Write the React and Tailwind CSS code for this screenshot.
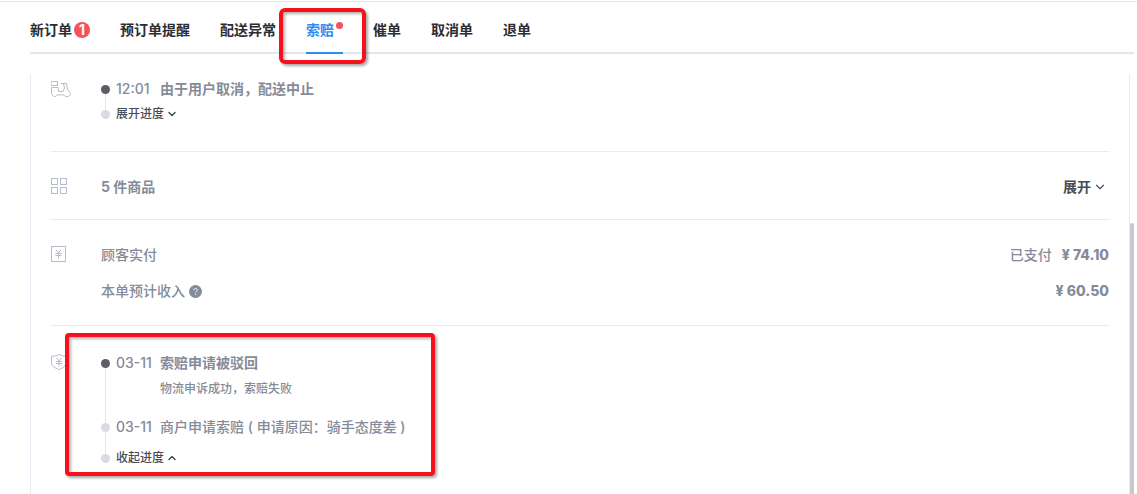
import { FiChevronDown, FiChevronUp } from 'react-icons/fi';

const tabs = [
    { label: '新订单', count: 1 },
    { label: '预订单提醒' },
    { label: '配送异常' },
    { label: '索赔', active: true, dot: true },
    { label: '催单' },
    { label: '取消单' },
    { label: '退单' },
];

const ScooterIcon = () => (
    <svg className="w-5 h-4" viewBox="0 0 20 16" fill="none" stroke="currentColor" strokeLinejoin="round" strokeLinecap="round">
        <rect x="0.5" y="0.5" width="6" height="4" />
        <path d="M10.500 2.500h2l1 4.500-1.500 3.500H7.500l-.5-4H.5v6c0 .8.400 1.300 1.100 1.500.3 1 1.100 1.500 2.100 1.500s1.900-.6 2.200-1.600h7c.4 1.100 1.600 1.700 3.100 1.700 2 0 3.500-1.200 3.500-3 0-1.500-1-2.600-2.500-2.900L15.300 2.500h-2.800" />
    </svg>
);

const GridIcon = () => (
    <svg className="w-4 h-4" viewBox="0 0 16 16" fill="none" stroke="currentColor">
        <rect x="0.5" y="0.5" width="6" height="6" />
        <rect x="9.5" y="0.5" width="6" height="6" />
        <rect x="0.5" y="9.5" width="6" height="6" />
        <rect x="9.5" y="9.5" width="6" height="6" />
    </svg>
);

const MoneyIcon = () => (
    <svg className="w-4 h-4" viewBox="0 0 16 16" fill="none" stroke="currentColor">
        <rect x="0.5" y="0.5" width="14" height="15" />
        <path d="M5 3.500l2.500 3.500 2.500-3.500M4.500 7.500h6M4.500 9.500h6M7.500 7v5.500" />
    </svg>
);

const ShieldIcon = () => (
    <svg className="w-4 h-4" viewBox="0 0 16 16" fill="none" stroke="currentColor">
        <path d="M8 .5c2 1.200 4.500 1.600 7 1.600v6.400c0 3.500-3 5.700-7 7-4-1.300-7.500-3.500-7.500-7V2.100C3.500 2.100 6 1.700 8 .5z" />
        <path d="M5.500 4l2.500 3 2.500-3M5 7.500h6M5 9.500h6M8 7v5.500" />
    </svg>
);

const HelpIcon = () => (
    <svg className="w-[13px] h-[13px]" viewBox="0 0 13 13" fill="none">
        <circle cx="6.5" cy="6.5" r="6.500" fill="#858b99" />
        <path d="M4.700 5.200c0-1 .8-1.700 1.800-1.700s1.800.7 1.800 1.600c0 1.200-1.700 1.300-1.700 2.500M6.600 8.800v1.100" stroke="#fff" />
    </svg>
);

const Tab = ({ label, count, dot, active }) => (
    <button
        role="tab"
        aria-selected={!!active}
        className={`relative h-[52px] -mb-[2px] pt-[18px] pb-3 flex items-center whitespace-nowrap border-b-2 ${active ? 'text-[#2d8cf0] border-[#2d8cf0]' : 'text-[#2b2d33] border-transparent'}`}
    >
        {label}
        {count && (
            <span className="ml-[2px] w-4 h-4 rounded-full bg-[#f5515a] text-white text-sm leading-4 font-bold text-center">{count}</span>
        )}
        {dot && <span className="ml-[2px] mb-[10px] w-[7px] h-[7px] rounded-full bg-[#f5515a]" />}
        {active && (
            <span className="absolute z-10 top-[6px] -left-[27px] -right-[23px] -bottom-[12px] border-4 border-[#f5101c] rounded-md shadow-[2px_2px_3px_rgba(0,0,0,0.35),inset_2px_2px_3px_rgba(0,0,0,0.3)]" />
        )}
    </button>
);

const Section = ({ icon, className, children }) => (
    <section className={`relative flex ${className}`}>
        <div className="w-[50px] shrink-0 text-[#b4bccd]">{icon}</div>
        <div className="flex-1">{children}</div>
    </section>
);

// one node of the progress line, the line runs down to the next node
const Step = ({ current, last, className = '', children }) => (
    <li className={`relative flex ${className}`}>
        {!last && <span className="absolute left-1 top-[10px] -bottom-[10px] w-px bg-[#e4e7f0]" />}
        <div className="w-[15px] shrink-0">
            <span className={`relative block mt-[6px] w-[9px] h-[9px] rounded-full ${current ? 'bg-[#5a5e6b]' : 'bg-[#d6dbe6]'}`} />
        </div>
        {children}
    </li>
);

const ToggleButton = ({ open, children }) => (
    <button className="h-5 flex items-center gap-[2px] text-xs font-medium text-[#4a4d57]">
        {children}
        {open ? <FiChevronUp className="w-3 h-3" strokeWidth={3} /> : <FiChevronDown className="w-3 h-3" strokeWidth={3} />}
    </button>
);

const App = () => {
    return (
        <div className="min-h-screen flex flex-col pt-px bg-white font-['Inter','Noto_Sans_CJK_SC',sans-serif] text-sm leading-5 text-[#858b99]">
            <header className="border-t border-[#e6e6e6]">
                <nav role="tablist" className="ml-[30px] mr-[3px] flex gap-[30px] border-b-2 border-[#e4e7ed] font-bold">
                    {tabs.map((tab) => <Tab key={tab.label} {...tab} />)}
                </nav>
            </header>

            <div className="flex-1 flex ml-[30px] mr-[3px] mt-5">
                <main className="flex-1 px-5 border-x border-[#e8eaf4] divide-y divide-[#e8e9f2]">
                    <Section icon={<ScooterIcon />} className="pt-[5px] pb-[27px] *:first:pt-[2px]">
                        <ol>
                            <Step current className="pb-[5px]">
                                <span className="w-11 font-medium">12:01</span>
                                <strong>由于用户取消，配送中止</strong>
                            </Step>
                            <Step last>
                                <ToggleButton>展开进度</ToggleButton>
                            </Step>
                        </ol>
                    </Section>

                    <Section icon={<GridIcon />} className="pt-[25px] pb-[22px] *:first:pt-px">
                        <div className="flex justify-between">
                            <strong>5 件商品</strong>
                            <button className="mr-[2px] flex items-center gap-[2px] font-bold text-[#4a4d57]">
                                展开
                                <FiChevronDown className="w-[14px] h-[14px]" />
                            </button>
                        </div>
                    </Section>

                    <Section icon={<MoneyIcon />} className="pt-[25px] pb-6 *:first:pt-px">
                        <dl className="flex flex-col gap-4 font-medium">
                            <div className="flex justify-between">
                                <dt>顾客实付</dt>
                                <dd className="flex gap-[10px]">已支付<b className="font-extrabold">¥ 74.10</b></dd>
                            </div>
                            <div className="flex justify-between">
                                <dt className="flex items-center gap-1">本单预计收入<HelpIcon /></dt>
                                <dd><b className="font-extrabold">¥ 60.50</b></dd>
                            </div>
                        </dl>
                    </Section>

                    <Section icon={<ShieldIcon />} className="pt-[27px] pb-[25px] *:first:pt-px">
                        <ol>
                            <Step current className="pb-[18px]">
                                <span className="w-11 font-medium">03-11</span>
                                <div>
                                    <strong className="block">索赔申请被驳回</strong>
                                    <p className="mt-[6px] text-xs leading-5 font-medium">物流申诉成功，索赔失败</p>
                                </div>
                            </Step>
                            <Step className="pb-[11px]">
                                <span className="w-11 font-medium">03-11</span>
                                <span className="font-medium">商户申请索赔 ( 申请原因：骑手态度差 )</span>
                            </Step>
                            <Step last>
                                <ToggleButton open>收起进度</ToggleButton>
                            </Step>
                        </ol>
                        <span className="absolute left-[14px] top-[7px] bottom-[17px] w-[370px] border-4 border-[#f5101c] rounded-sm shadow-[2px_2px_3px_rgba(0,0,0,0.35),inset_2px_2px_3px_rgba(0,0,0,0.3)]" />
                    </Section>
                </main>
                <div className="w-1 pt-[149px] flex">
                    <div className="flex-1 rounded-t-sm bg-[#c6c8d0]" />
                </div>
            </div>
        </div>
    );
};

export default App;
